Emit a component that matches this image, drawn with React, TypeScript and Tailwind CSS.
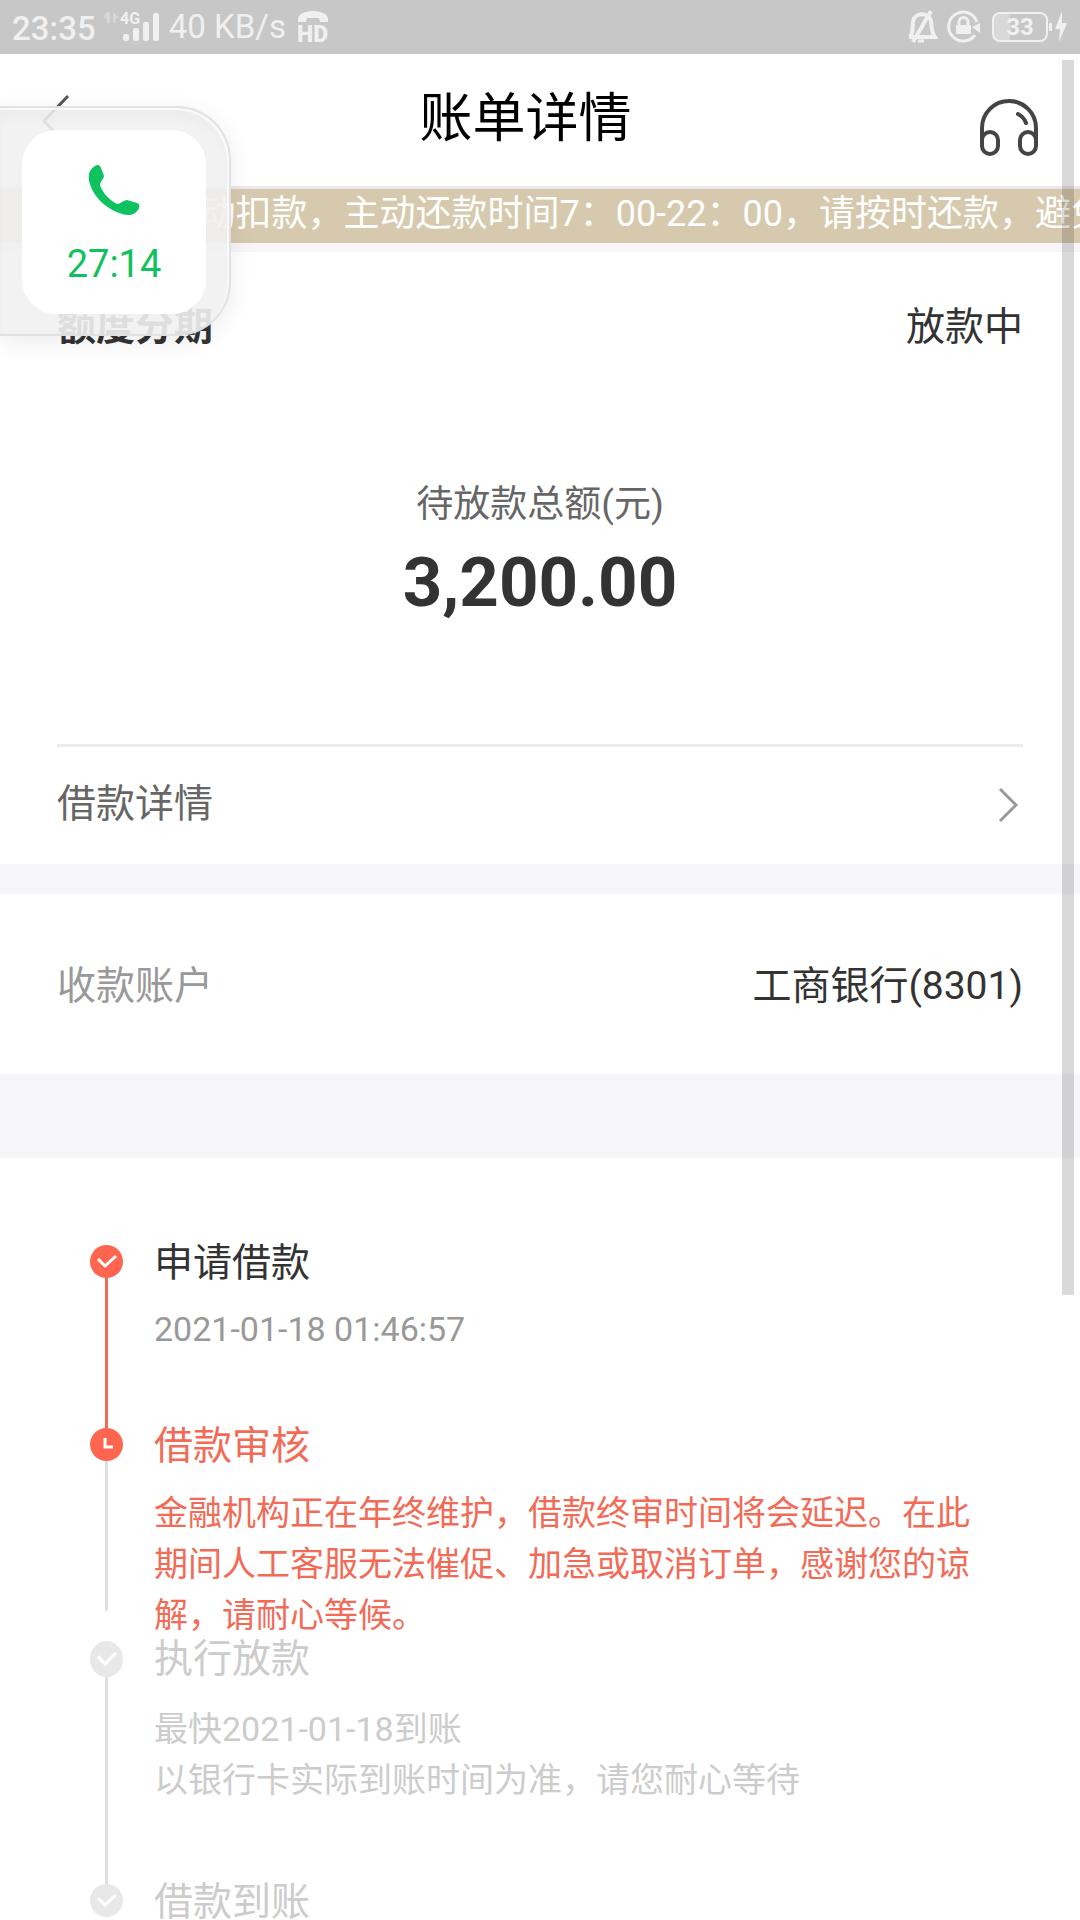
import { clsx } from "clsx";

type Step = {
  title: string;
  lines: string[];
  icon: "check" | "clock";
  active: boolean;
  titleClass: string;
  textClass: string;
  lineClass?: string;
  bodyClass: string;
  iconClass: string;
};

const steps: Step[] = [
  {
    title: "申请借款",
    lines: ["2021-01-18 01:46:57"],
    icon: "check",
    active: true,
    titleClass: "text-[#333333]",
    textClass: "mt-[23px] text-[#999999]",
    lineClass: "bg-[#f26b57]",
    bodyClass: "pb-[73px]",
    iconClass: "h-[33px]",
  },
  {
    title: "借款审核",
    lines: ["金融机构正在年终维护，借款终审时间将会延迟。在此期间人工客服无法催促、加急或取消订单，感谢您的谅解，请耐心等候。"],
    icon: "clock",
    active: true,
    titleClass: "text-[#f26b57]",
    textClass: "mt-[24px] text-[#f26b57]",
    lineClass: "bg-[#e0e0e0] mb-[30px]",
    bodyClass: "",
    iconClass: "h-[33px]",
  },
  {
    title: "执行放款",
    lines: ["最快2021-01-18到账", "以银行卡实际到账时间为准，请您耐心等待"],
    icon: "check",
    active: false,
    titleClass: "text-[#cccccc]",
    textClass: "mt-[27px] text-[#cccccc]",
    lineClass: "bg-[#e0e0e0]",
    bodyClass: "pb-[78px]",
    iconClass: "h-[36px]",
  },
  {
    title: "借款到账",
    lines: [],
    icon: "check",
    active: false,
    titleClass: "text-[#cccccc]",
    textClass: "",
    bodyClass: "",
    iconClass: "h-[33px]",
  },
];

function StatusBar() {
  return (
    <div className="flex h-[54px] items-start justify-between bg-[#c7c7c7] pl-3 pr-[11px] text-[#f0f0f0]">
      <div className="flex items-start">
        <span className="pt-[8px] text-[33px] leading-[42px] font-medium">23:35</span>
        <svg className="ml-[7px] mt-[10px] h-8 w-[58px]" viewBox="0 0 58 32" fill="currentColor">
          <path d="M4 2h3v11H4V8H0zM10 13V2l6 6h-3l-1 5z" opacity="0.4" />
          <text x="17" y="14" fontSize="16" fontWeight="700">4G</text>
          <rect x="20" y="24" width="6" height="7" rx="2" />
          <rect x="30" y="18" width="6" height="13" rx="2" />
          <rect x="40" y="12" width="6" height="19" rx="2" />
          <rect x="50" y="3" width="6" height="28" rx="2" />
        </svg>
        <span className="ml-[8px] pt-[6px] text-[33px] leading-[42px]">40 KB/s</span>
        <svg className="ml-[11px] mt-[10px] h-[34px] w-[32px]" viewBox="0 0 32 34" fill="currentColor">
          <path d="M1 12V8C3 3 9 1 16 1s13 2 15 7v4h-8l-1-4H10l-1 4z" />
          <text x="0" y="32" fontSize="23" fontWeight="900">HD</text>
        </svg>
      </div>
      <div className="flex items-start pt-[10px]">
        <svg className="h-[34px] w-[32px]" viewBox="0 0 32 34" fill="none" stroke="currentColor" strokeWidth="4">
          <path d="M4 27C8 22 6 16 7 11c2-9 16-9 18 0 1 6 0 11 4 16H3" />
          <path d="M25 1 7 32" />
          <path d="M12 31h6" strokeWidth="3" />
        </svg>
        <svg className="ml-[9px] h-[34px] w-[34px]" viewBox="0 0 34 34" fill="none" stroke="currentColor">
          <path d="M28 25A14.500 14.500 0 1 1 30 12" strokeWidth="3" />
          <path d="M33 13v10l-8-6z" fill="currentColor" stroke="none" />
          <path d="M12 16v-4a4.500 4.500 0 0 1 9 0v4" strokeWidth="3" />
          <rect x="9" y="15" width="15" height="9" rx="1" fill="currentColor" stroke="none" />
        </svg>
        <div className="ml-[11px] mt-[2px] flex h-[30px] w-[56px] items-center justify-center rounded-[8px] border-2 border-[#f0f0f0] bg-linear-to-r from-[#d8d8d8] from-30% to-[#c7c7c7] to-30% text-[24px] leading-none font-bold">
          33
        </div>
        <svg className="ml-px h-[34px] w-[20px]" viewBox="0 0 20 34" fill="currentColor">
          <rect x="0" y="13" width="3" height="8" rx="1" />
          <path d="M13 1 6 19h5L10 32l8-19h-5z" />
        </svg>
      </div>
    </div>
  );
}

function Header() {
  return (
    <header className="flex h-[132px] items-start justify-between bg-white pl-[41px] pr-[42px]">
      <button aria-label="返回" className="mt-[40px]">
        <svg className="h-[54px] w-[30px]" viewBox="0 0 30 54" fill="none" stroke="#555555" strokeWidth="3">
          <path d="M27 2 3 27l24 25" />
        </svg>
      </button>
      <h1 className="mt-[33px] text-[53px] leading-[64px] text-black">账单详情</h1>
      <button aria-label="客服" className="mt-[45px]">
        <svg className="h-[58px] w-[58px]" viewBox="0 0 58 58" fill="none" stroke="#444444" strokeWidth="4">
          <path d="M2 45V29a27 27 0 0 1 54 0v16" />
          <rect x="2" y="33" width="16" height="22" rx="8" />
          <rect x="40" y="33" width="16" height="22" rx="8" />
          <path d="M38 15q6 3 8 9" strokeLinecap="round" />
        </svg>
      </button>
    </header>
  );
}

function StepIcon({ step }: { step: Step }) {
  return (
    <svg
      className={clsx("w-[33px] shrink-0", step.iconClass)}
      viewBox="0 0 33 33"
      preserveAspectRatio="none"
      fill="none"
      stroke="#ffffff"
      strokeWidth="3"
    >
      <circle cx="16.500" cy="16.500" r="16.500" fill={step.active ? "#ff654f" : "#e8e8e8"} stroke="none" />
      {step.icon === "check" ? <path d="m8 14 7 7 11-10" /> : <path d="M15 10v9h8" />}
    </svg>
  );
}

function Timeline() {
  return (
    <ol className="bg-white pl-[90px] pr-[96px] pt-[87px]">
      {steps.map((step) => (
        <li key={step.title} className="flex gap-[31px]">
          <div className="flex flex-col items-center">
            <StepIcon step={step} />
            {step.lineClass && <div className={clsx("w-[3px] flex-1", step.lineClass)} />}
          </div>
          <div className={clsx("min-w-0 flex-1", step.bodyClass)}>
            <h2 className={clsx("text-[39px] leading-[36px]", step.titleClass)}>{step.title}</h2>
            {step.lines.length > 0 && (
              <div className={clsx("text-[34px] leading-[51px]", step.textClass)}>
                {step.lines.map((line) => (
                  <p key={line}>{line}</p>
                ))}
              </div>
            )}
          </div>
        </li>
      ))}
    </ol>
  );
}

function CallBubble() {
  return (
    <button className="absolute left-0 top-[106px] rounded-r-[54px] border-y-2 border-r-2 border-[#dedede]/80 bg-[#f1f1f1]/90 pt-[22px] pb-[20px] pl-[22px] pr-[23px] shadow-[0_6px_24px_rgba(0,0,0,0.08),inset_-2px_2px_0_rgba(255,255,255,0.7),inset_0_12px_6px_rgba(0,0,0,0.02)]">
      <span className="flex h-[184px] w-[184px] flex-col items-center rounded-[34px] bg-white pt-[34px] text-[#10c160]">
        <svg className="h-[52px] w-[52px]" viewBox="0 0 52 52" fill="currentColor">
          <path d="M7 2c3-2 5-1 6 2l3 8c0 2-4 6-4 9 2 7 9 15 17 19 3 0 7-4 10-4l10 3c3 1 3 4 1 7-4 6-11 6-19 3C15 43 4 30 1 17 0 9 2 5 7 2z" />
        </svg>
        <span className="mt-[24px] text-[38px] leading-[48px]">27:14</span>
      </span>
    </button>
  );
}

export default function App() {
  return (
    <div className="relative min-h-screen overflow-hidden bg-[#fefefe] font-[Roboto,'Noto_Sans_CJK_SC',sans-serif]">
      <StatusBar />
      <Header />
      <div className="flex h-[66px] justify-end overflow-hidden border-t-[3px] border-b-[9px] border-t-[#ebe9ec] border-b-[#f6f6f9] bg-[#d7c9ae]">
        <p className="-mr-[27px] whitespace-nowrap text-[36px] leading-[50px] text-white">
          自动扣款，主动还款时间7：00-22：00，请按时还款，避免
        </p>
      </div>

      <main>
        <section className="bg-white px-[57px]">
          <div className="flex justify-between pt-[48px] text-[39px] leading-[54px] text-[#333333]">
            <h2 className="font-bold">额度分期</h2>
            <span>放款中</span>
          </div>
          <div className="flex flex-col items-center border-b-[3px] border-[#ebebeb] pt-[124px] pb-[117px]">
            <p className="text-[37px] leading-[54px] text-[#666666]">待放款总额(元)</p>
            <p className="mt-[7px] text-[69px] leading-[88px] font-bold text-[#333333]">3,200.00</p>
          </div>
          <a href="#detail" className="flex h-[117px] items-center justify-between pb-[2px] text-[39px] text-[#666666]">
            借款详情
            <svg className="mr-[4px] h-[36px] w-[22px]" viewBox="0 0 22 36" fill="none" stroke="#999999" strokeWidth="3">
              <path d="m3 2 16 16L3 34" />
            </svg>
          </a>
        </section>

        <section className="flex h-[294px] items-center justify-between border-t-[30px] border-b-[84px] border-[#f6f6f9] bg-white px-[57px] pt-[4px] text-[39px]">
          <span className="text-[#999999]">收款账户</span>
          <span className="text-[#333333]">工商银行(8301)</span>
        </section>

        <Timeline />
      </main>

      <CallBubble />
      <div className="absolute right-[6px] top-[60px] h-[1235px] w-3 bg-black/15" />
    </div>
  );
}
